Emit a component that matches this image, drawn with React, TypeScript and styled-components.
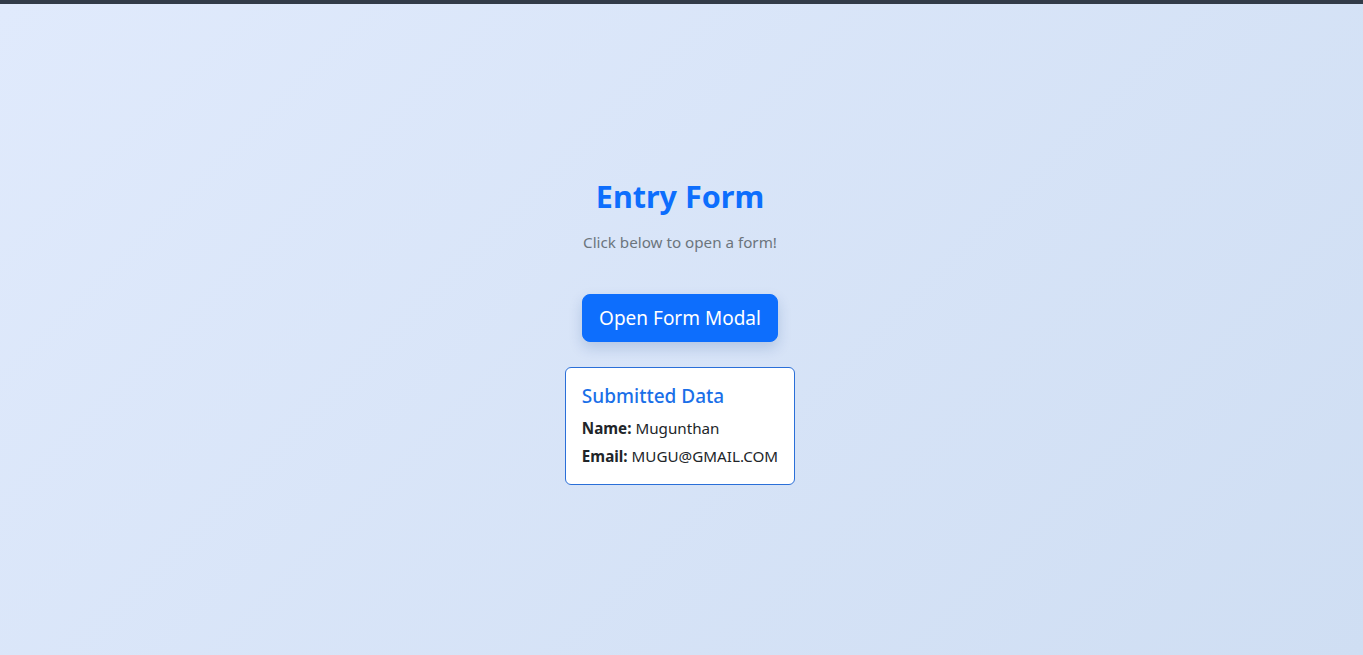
import React from "react";
import styled, { createGlobalStyle } from "styled-components";

const Global = createGlobalStyle`
  html, body { margin: 0; padding: 0; }
  body {
    font-family: "Noto Sans", "Open Sans", sans-serif;
    color: #212529;
  }
  * { box-sizing: border-box; }
`;

const TopBar = styled.div`
  height: 4px;
  background: #323b48;
`;

const Page = styled.main`
  min-height: 651px;
  background: linear-gradient(135deg, #e0eafc 0%, #cfdef3 100%);
  display: flex;
  flex-direction: column;
  align-items: center;
  justify-content: center;
  padding: 3px 3px 0 0;
`;

const Title = styled.h1`
  margin: 0 0 15px;
  font-size: 30.5px;
  line-height: 38px;
  font-weight: 700;
  color: #0d6efd;
`;

const Subtitle = styled.p`
  margin: 0 0 40px;
  font-size: 15.2px;
  line-height: 24px;
  color: #6c757d;
`;

const PrimaryButton = styled.button`
  font-family: inherit;
  font-size: 19px;
  line-height: 30px;
  padding: 8px 16px;
  color: #fff;
  background: #0d6efd;
  border: 1px solid #0d6efd;
  border-radius: 8px;
  box-shadow: 0 6px 14px rgba(13, 60, 140, 0.18);
  cursor: pointer;
  margin-bottom: 25px;
`;

const Card = styled.section`
  background: #fff;
  border: 1px solid #2a6fd8;
  border-radius: 6px;
  padding: 16px;
`;

const CardTitle = styled.h5`
  margin: 0 0 8px;
  font-size: 19px;
  line-height: 24px;
  font-weight: 500;
  color: #1a6fe8;
`;

const Field = styled.p<{ $last?: boolean }>`
  margin: 0 0 ${(p) => (p.$last ? 0 : 4)}px;
  font-size: 15.2px;
  line-height: 24px;
  color: #212529;
  b { font-weight: 700; }
`;

export default function App() {
  return (
    <>
      <Global />
      <TopBar />
      <Page>
        <Title>Entry Form</Title>
        <Subtitle>Click below to open a form!</Subtitle>
        <PrimaryButton>Open Form Modal</PrimaryButton>
        <Card>
          <CardTitle>Submitted Data</CardTitle>
          <Field>
            <b>Name:</b> Mugunthan
          </Field>
          <Field $last>
            <b>Email:</b> MUGU@GMAIL.COM
          </Field>
        </Card>
      </Page>
    </>
  );
}
